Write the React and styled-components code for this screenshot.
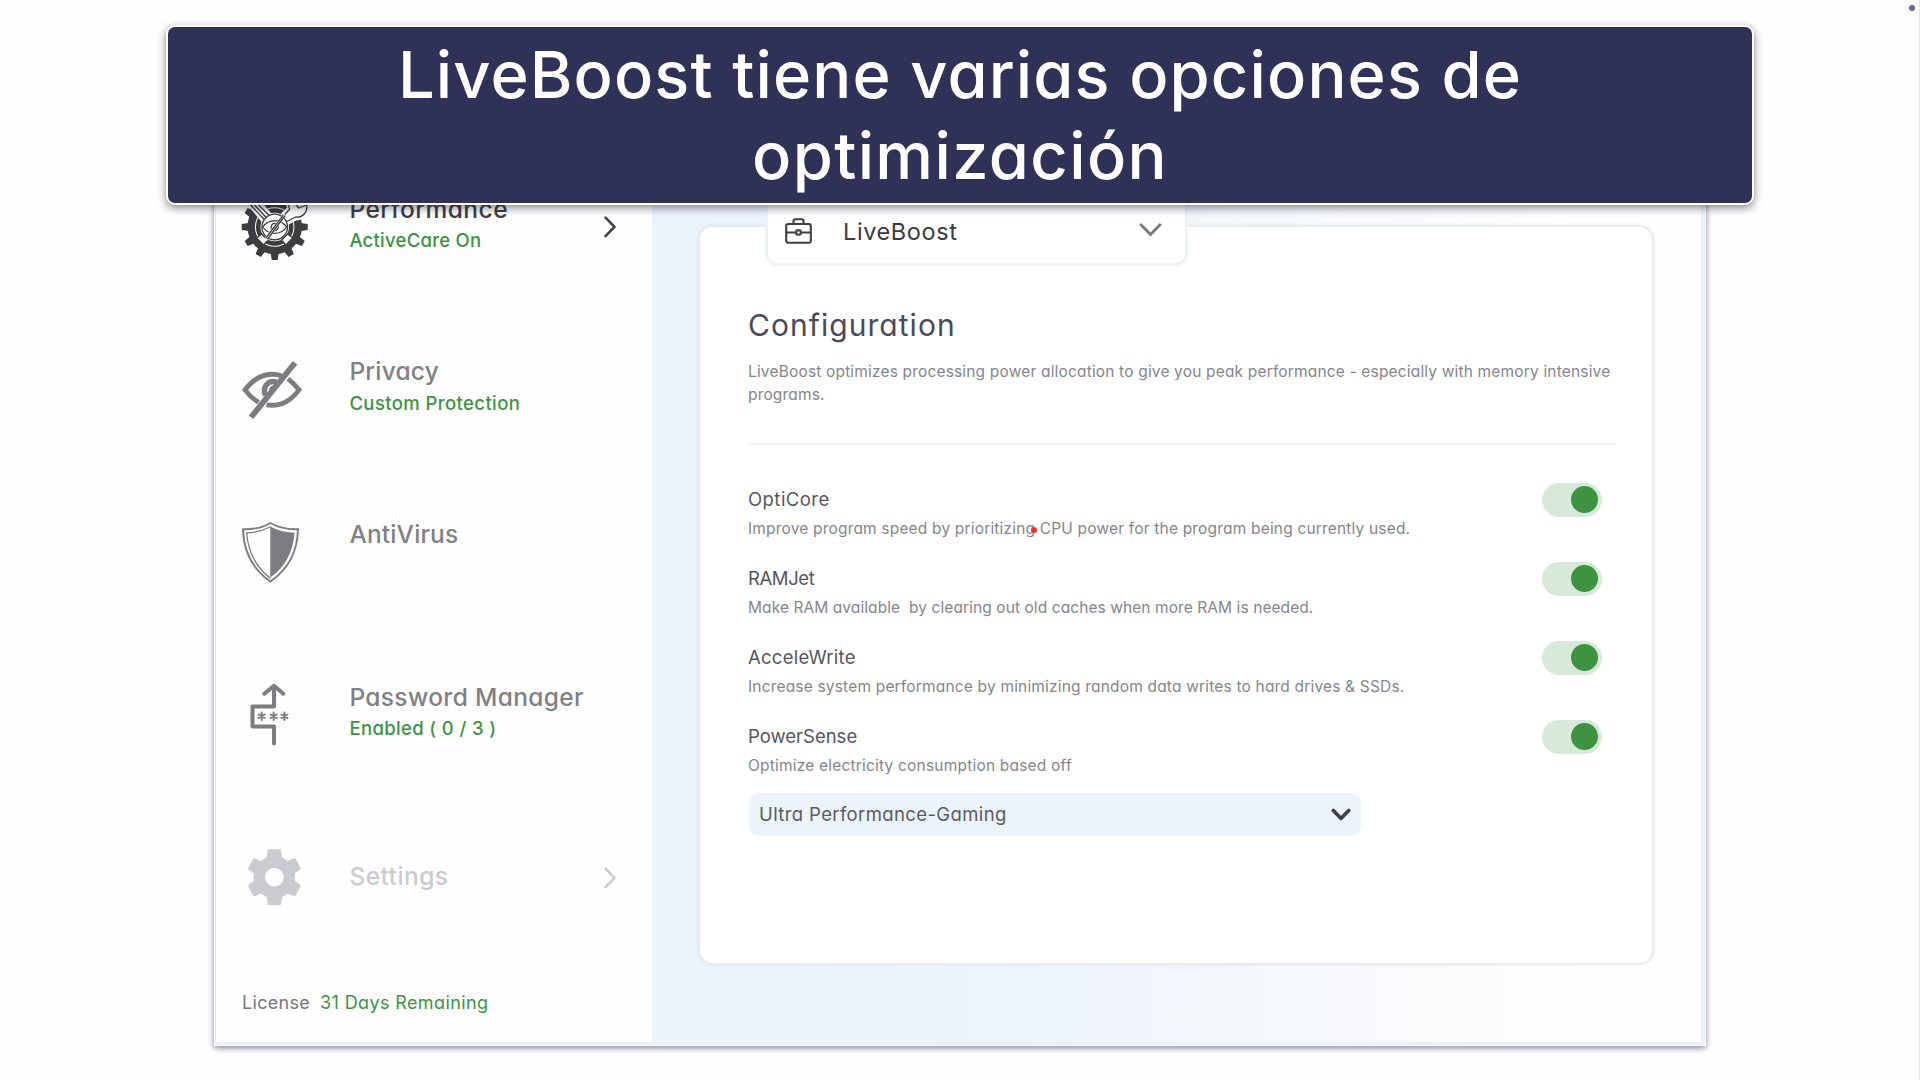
import styled, { createGlobalStyle } from "styled-components";

const GlobalStyle = createGlobalStyle`
  * { box-sizing: border-box; }
  body {
    margin: 0;
    background: #fefefe;
    font-family: Inter, "Open Sans", sans-serif;
    font-feature-settings: "cv11";
  }
`;

const Page = styled.div`
position: relative;
width: 1920px;
height: 1080px;
padding-top: 120px;
overflow: hidden;
border-right: 1px solid #e6e6e8;
`;

const Banner = styled.h1`
position: absolute;
top: 25px;
left: 166px;
width: 1588px;
height: 180px;
margin: 0;
padding-top: 8px;
border: 2px solid #fff;
border-radius: 9px;
background: #2f3157;
box-shadow: 0 3px 8px rgba(20, 20, 40, 0.5);
color: #fff;
font-size: 65px;
font-weight: 450;
line-height: 80.5px;
text-align: center;
z-index: 5;
`;

const BannerLine = styled.span`
display: block;
letter-spacing: ${(p) => p.$track}px;
`;

const CornerDot = styled.div`
position: absolute;
top: 5px;
right: 4px;
width: 6px;
height: 6px;
border-radius: 50%;
background: #66688a;
`;

const Window = styled.div`
display: flex;
width: 1492px;
height: 926px;
margin-left: 214px;
border: 1px solid #fff;
box-shadow: 0 2px 6px rgba(50, 50, 85, 0.6);
`;

const Frame = styled.div`
display: flex;
flex: 1;
border-left: 1px solid #e6e9ef;
border-right: 4px solid #e9f1f9;
border-bottom: 3px solid #e9f0f7;
`;

const Sidebar = styled.nav`
display: flex;
flex-direction: column;
width: 436px;
padding: 71px 36px 0 26px;
background: #fefefe;
`;

const NavItem = styled.div`
display: flex;
align-items: flex-start;
height: ${(p) => p.$height || 162.7}px;
`;

const IconSlot = styled.div`
width: 107.4px;
height: 70px;
svg { display: block; overflow: visible; }
`;

const NavText = styled.div`
flex: 1;
`;

const NavTitle = styled.div`
color: ${(p) => p.$color};
font-size: 24.5px;
font-weight: 500;
line-height: 32px;
letter-spacing: ${(p) => p.$track}px;
white-space: nowrap;
padding-top: ${(p) => p.$top || 0.7}px;
`;

const NavStatus = styled.div`
margin-top: 2.600px;
color: #3b9443;
font-size: 18.5px;
font-weight: 450;
line-height: 26px;
letter-spacing: ${(p) => p.$track}px;
white-space: nowrap;
`;

const License = styled.div`
display: flex;
gap: 10px;
margin-top: 77px;
color: #77777f;
font-size: 18px;
line-height: 26px;
letter-spacing: 0.3px;
`;

const DaysLeft = styled.span`
color: #3b9443;
letter-spacing: 0.38px;
`;

const Main = styled.main`
flex: 1;
padding: 104px 0 0 46px;
background: linear-gradient(90deg, #ebf3fb 0%, #edf4fb 36%, #f8fafd 68%, #fefefe 88%);
`;

const Card = styled.section`
width: 956px;
height: 740px;
padding-left: 48px;
border: 2px solid #e9ecef;
border-radius: 15px;
background: #fff;
box-shadow: 0 0 3px rgba(120, 130, 150, 0.15);
`;

const ToolSelect = styled.div`
display: flex;
align-items: center;
width: 423px;
height: 79px;
margin: -40px 0 0 17px;
padding: 9px 23px 0 17px;
border: 3px solid #ebf2fb;
border-radius: 13px;
background: #fff;
`;

const ToolName = styled.span`
flex: 1;
margin-left: 31px;
color: #3a3a44;
font-size: 23.5px;
letter-spacing: 0.6px;
`;

const Title = styled.h2`
margin: 37px 0 0;
color: #4a4a58;
font-size: 30px;
font-weight: 400;
line-height: 44px;
letter-spacing: 1.05px;
`;

const Intro = styled.p`
margin: 13px 0 0;
color: #85858e;
font-size: 15.5px;
line-height: 23.4px;
letter-spacing: 0.17px;
white-space: nowrap;
`;

const Divider = styled.hr`
width: 868px;
height: 2px;
margin: 36px 0 38px;
border: 0;
background: #eff5fa;
`;

const OptionList = styled.div`
display: flex;
flex-direction: column;
gap: 21px;
`;

const Option = styled.div`
display: flex;
justify-content: space-between;
width: 854px;
height: 58px;
padding-top: 2px;
`;

const OptionName = styled.div`
color: #55555f;
font-size: 18.5px;
line-height: 28px;
letter-spacing: ${(p) => p.$track}px;
`;

const OptionInfo = styled.div`
position: relative;
margin-top: 4px;
color: #85858e;
font-size: 15.5px;
line-height: 24px;
letter-spacing: ${(p) => p.$track}px;
white-space: pre;
`;

const Pointer = styled.i`
position: absolute;
top: 10px;
left: 283px;
width: 6px;
height: 6px;
border-radius: 50%;
background: #ee3030;
`;

const Switch = styled.div`
display: flex;
align-items: center;
justify-content: flex-end;
width: 60px;
height: 34px;
margin-top: -2px;
padding-right: 4px;
border-radius: 17px;
background: #d7e9d9;
`;

const Knob = styled.span`
width: 27px;
height: 27px;
border-radius: 50%;
background: #3e9341;
`;

const PowerSelect = styled.div`
display: flex;
align-items: center;
justify-content: space-between;
width: 612px;
height: 43px;
margin: 15px 0 0 1px;
padding: 0 10px;
border-radius: 11px;
background: #ebf3fb;
color: #5a5a64;
font-size: 18.5px;
letter-spacing: 0.38px;
`;

const teeth = Array.from({ length: 12 }, (_, i) => i * 30);

function PerformanceIcon() {
  return (
    <svg width="66" height="70" viewBox="-32.7 -35 66 70" fill="none">
      <g fill="#3d3c40">
        {teeth.map((a) => (
          <path key={a} d="M-4-26 -3-33H3L4-26Z" transform={`rotate(${a})`} />
        ))}
      </g>
      <circle r="23.5" stroke="#3d3c40" strokeWidth="7.5" />
      <circle r="16.5" stroke="#3d3c40" strokeWidth="4.5" />
      {/* crossed tools behind the eye */}
      <g fill="#fff" stroke="#3d3c40" strokeWidth="1.3" strokeLinejoin="round">
        <path d="M-18 11-13 7-7 13-11 18Z" />
        <path d="M18 11 13 7 7 13 11 18Z" />
        <path d="M-29-25-20-32-3-12-12-5Z" stroke="#fff" />
        <path d="M-26-24-22-28-5-11-10-7Z" />
        <path d="M-24-26-8-9" />
        <path d="M6-11 14-19C11-25 14-33 22-33L21-25 24-20 33-24C34-15 29-8 21-8L12-3Z" stroke="#fff" strokeWidth="3" />
        <path d="M7-9 15-18C12-24 15-31 21-32L20-24 24-19 32-22C33-15 28-9 21-10L11-5Z" />
      </g>
      <circle r="12.8" fill="#fff" stroke="#3d3c40" strokeWidth="1.3" />
      <g stroke="#3d3c40" strokeWidth="1.3" strokeLinecap="round">
        <path d="M-12 0C-6-8.5 6-8.5 12 0C6 8.5-6 8.5-12 0Z" />
        <circle r="3.6" />
        <path d="M9-11-8 11.5" stroke="#fff" strokeWidth="4" />
        <path d="M10-11-7 12M8.3-11.6-8.8 11" />
      </g>
    </svg>
  );
}

function PrivacyIcon() {
  return (
    <svg width="66" height="70" viewBox="0 -6.3 66 70" fill="none" stroke="#7d7c81" strokeWidth="4.8">
      <path d="M39.5 14.4C25 10 13 15.5 3 28.5C7 34 11.5 38 16.5 41" />
      <path d="M46 17.5C50 20.5 53.5 24 57 28.5C49 39.5 38 45.5 24.5 43.6" />
      <path d="M34.5 20.7C26 18.5 20 26 23.5 34" strokeWidth="5.4" />
      <path d="M32.5 25.3C29.5 25 27.7 27 28 30" strokeWidth="2" />
      <path d="M53 1.5 9 56" strokeWidth="5.8" />
    </svg>
  );
}

function AntiVirusIcon() {
  return (
    <svg width="66" height="70" viewBox="0 -5 66 70" fill="none" stroke="#7d7c81">
      <path d="M28.3 1C20 6 9 7.5 1 7.2C1.5 31 12 48 28.3 59.6C45 48 55.5 31 56 7.2C48 7.5 37 6 28.3 1Z" strokeWidth="1.9" />
      <path d="M28.3 4.7C20.5 9 12 10.6 4.7 10.8C6 31 14 45 28.3 56.5" strokeWidth="1.3" />
      <path d="M28.3 4.2C36 9 45 10.4 52.5 10.7C51 31 43 45 28.3 55.5Z" fill="#7d7c81" stroke="none" />
    </svg>
  );
}

function PasswordIcon() {
  return (
    <svg width="66" height="70" viewBox="0 0.5 66 70" fill="none" stroke="#7d7c81" strokeWidth="4" strokeLinecap="round" strokeLinejoin="round">
      <path d="M22.3 14.2 32 6.300 41.300 14.200" />
      <path d="M32 7V27H10.500V47H32V64" />
      <g strokeWidth="2">
        {[19.7, 31.7, 42.4].map((x) => (
          <path key={x} d={`M${x} 33V40.4M${x - 3} 35 ${x + 3} 38.4M${x + 3} 35 ${x - 3} 38.4`} />
        ))}
      </g>
    </svg>
  );
}

function SettingsIcon() {
  return (
    <svg width="66" height="70" viewBox="-32.4 -34.2 66 70">
      <path
        fill="#cacbd1"
        fillRule="evenodd"
        stroke="#cacbd1"
        strokeWidth="1"
        strokeLinejoin="round"
        d="M-6-27.5H6L7.3-19.5Q10.5-18 13.5-15.7L20.5-18.7 26-8.5 20-3.8Q20.6 0 20 3.8L26 8.5 20.5 18.7 13.5 15.7Q10.5 18 7.3 19.5L6 27.5H-6L-7.3 19.5Q-10.5 18-13.5 15.7L-20.5 18.7-26 8.5-20 3.8Q-20.6 0-20-3.8L-26-8.5-20.5-18.7-13.5-15.7Q-10.5-18-7.3-19.5ZM0-9.8A9.8 9.8 0 1 0 0 9.8A9.8 9.8 0 1 0 0-9.8Z"
      />
    </svg>
  );
}

function RightArrow({ color }) {
  return (
    <svg width="12" height="70" viewBox="0 0.3 12 70" fill="none" stroke={color} strokeWidth="2.5" strokeLinecap="round" strokeLinejoin="round">
      <path d="M1.5 26 10.5 35.2 1.5 44.5" />
    </svg>
  );
}

function Briefcase() {
  return (
    <svg width="27" height="26" viewBox="0 0 27 26" fill="none" stroke="#3f3f47" strokeWidth="2.1" strokeLinejoin="round">
      <rect x="1.2" y="6" width="24.6" height="18.8" rx="2" />
      <path d="M8.5 6V3Q8.5 1.2 10.3 1.2H16.7Q18.5 1.2 18.5 3V6M1.2 14.5H11M16 14.5H25.8" />
      <rect x="11.2" y="12.4" width="4.6" height="4.2" rx="1" />
    </svg>
  );
}

const options = [
  { name: "OptiCore", track: 0.45, info: "Improve program speed by prioritizing CPU power for the program being currently used.", infoTrack: 0.18, pointer: true },
  { name: "RAMJet", track: -0.4, info: "Make RAM available  by clearing out old caches when more RAM is needed.", infoTrack: 0.08 },
  { name: "AcceleWrite", track: 0.25, info: "Increase system performance by minimizing random data writes to hard drives & SSDs.", infoTrack: 0.18 },
  { name: "PowerSense", track: 0, info: "Optimize electricity consumption based off", infoTrack: 0.2 },
];

export default function App() {
  return (
    <Page>
      <GlobalStyle />
      <Banner>
        <BannerLine $track={1.12}>LiveBoost tiene varias opciones de</BannerLine>
        <BannerLine $track={1.35}>optimización</BannerLine>
      </Banner>
      <CornerDot />
      <Window>
        <Frame>
          <Sidebar>
            <NavItem>
              <IconSlot><PerformanceIcon /></IconSlot>
              <NavText>
                <NavTitle $color="#3d3d49" $track={0.5}>Performance</NavTitle>
                <NavStatus $track={0.25}>ActiveCare On</NavStatus>
              </NavText>
              <RightArrow color="#3d3d49" />
            </NavItem>
            <NavItem>
              <IconSlot><PrivacyIcon /></IconSlot>
              <NavText>
                <NavTitle $color="#808085" $track={0.2}>Privacy</NavTitle>
                <NavStatus $track={0.4}>Custom Protection</NavStatus>
              </NavText>
            </NavItem>
            <NavItem>
              <IconSlot><AntiVirusIcon /></IconSlot>
              <NavText>
                <NavTitle $color="#808085" $track={0.15}>AntiVirus</NavTitle>
              </NavText>
            </NavItem>
            <NavItem>
              <IconSlot><PasswordIcon /></IconSlot>
              <NavText>
                <NavTitle $color="#808085" $track={0.35}>Password Manager</NavTitle>
                <NavStatus $track={0.36}>Enabled ( 0 / 3 )</NavStatus>
              </NavText>
            </NavItem>
            <NavItem $height={70}>
              <IconSlot><SettingsIcon /></IconSlot>
              <NavText>
                <NavTitle $color="#cacbd1" $track={0.45} $top={17.5}>Settings</NavTitle>
              </NavText>
              <RightArrow color="#cacbd1" />
            </NavItem>
            <License>
              License <DaysLeft>31 Days Remaining</DaysLeft>
            </License>
          </Sidebar>
          <Main>
            <Card>
              <ToolSelect>
                <Briefcase />
                <ToolName>LiveBoost</ToolName>
                <svg width="23" height="16" viewBox="0 0 23 16" fill="none" stroke="#77777e" strokeWidth="2.8">
                  <path d="M1.2 1 11.500 11.500 21.800 1" />
                </svg>
              </ToolSelect>
              <Title>Configuration</Title>
              <Intro>
                LiveBoost optimizes processing power allocation to give you peak performance - especially with memory intensive
                <br />
                programs.
              </Intro>
              <Divider />
              <OptionList>
                {options.map((o) => (
                  <Option key={o.name}>
                    <div>
                      <OptionName $track={o.track}>{o.name}</OptionName>
                      <OptionInfo $track={o.infoTrack}>
                        {o.info}
                        {o.pointer && <Pointer />}
                      </OptionInfo>
                    </div>
                    <Switch><Knob /></Switch>
                  </Option>
                ))}
              </OptionList>
              <PowerSelect>
                Ultra Performance-Gaming
                <svg width="20" height="14" viewBox="0 0 20 14" fill="none" stroke="#3f3f49" strokeWidth="3.6" strokeLinecap="round" strokeLinejoin="round">
                  <path d="M2.3 3.5 10 11.5 17.7 3.5" />
                </svg>
              </PowerSelect>
            </Card>
          </Main>
        </Frame>
      </Window>
    </Page>
  );
}
